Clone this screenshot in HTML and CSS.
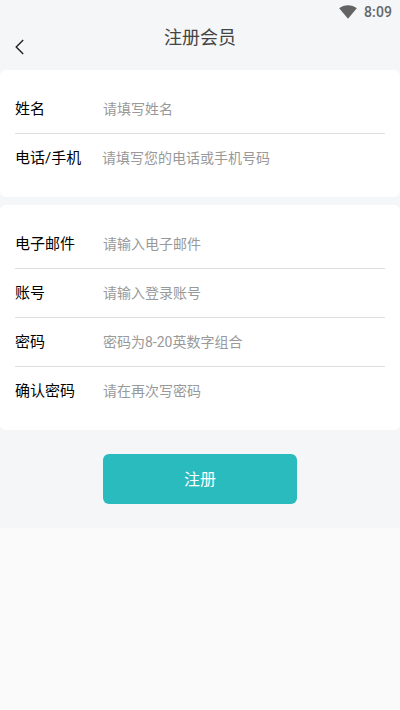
FILE: index.html
```html
<!DOCTYPE html>
<html lang="zh-CN">
<head>
<meta charset="utf-8">
<title>注册会员</title>
<link rel="stylesheet" href="styles.css">
</head>
<body>
<main class="page">
  <div class="status">
    <svg class="wifi" width="18" height="14" viewBox="0 0 18 14"><path d="M.2 3.2C5-.8 13-.8 17.8 3.2L9 13.8z"/></svg>
    <span>8:09</span>
  </div>
  <header class="header">
    <svg class="back" width="10" height="16" viewBox="0 0 10 16"><path d="M8.2 1 1.2 8l7 7"/></svg>
    <h1>注册会员</h1>
  </header>
  <section class="card">
    <label class="row"><span class="name">姓名</span><span class="hint">请填写姓名</span></label>
    <label class="row"><span class="name name-phone">电话/手机</span><span class="hint">请填写您的电话或手机号码</span></label>
  </section>
  <section class="card">
    <label class="row"><span class="name">电子邮件</span><span class="hint">请输入电子邮件</span></label>
    <label class="row"><span class="name">账号</span><span class="hint">请输入登录账号</span></label>
    <label class="row"><span class="name">密码</span><span class="hint">密码为8-20英数字组合</span></label>
    <label class="row"><span class="name">确认密码</span><span class="hint">请在再次写密码</span></label>
  </section>
  <button class="submit">注册</button>
</main>
</body>
</html>
```
FILE: styles.css
```css
* { box-sizing: border-box; }
body {
  margin: 0;
  background: #fafafa;
  font-family: Roboto, "Noto Sans CJK SC", sans-serif;
}
.page {
  height: 528px;
  background: #f4f6f8;
}
.status {
  height: 24px;
  padding: 0 8px;
  display: flex;
  align-items: center;
  justify-content: flex-end;
  gap: 7px;
  font-size: 14px;
  font-weight: 500;
  letter-spacing: 0.1px;
  color: #666;
}
.wifi {
  margin-bottom: 1px;
  fill: #636363;
}
.header {
  height: 46px;
  padding: 0 15px;
  display: grid;
  grid-template-columns: 10px 1fr 10px;
}
.back {
  margin-top: 15px;
  fill: none;
  stroke: #222;
  stroke-width: 1.4;
}
.header h1 {
  margin: 0;
  font-size: 18px;
  font-weight: 400;
  line-height: 28px;
  text-align: center;
  color: #444;
}
.card {
  margin-bottom: 8px;
  padding: 15px 15px 14px;
  background: #fff;
  border-radius: 6px;
}
.row {
  height: 49px;
  padding-bottom: 2px;
  display: flex;
  align-items: center;
  border-bottom: 1px solid #ddd;
}
.row:last-child { border-bottom-color: transparent; }
.name {
  width: 88px;
  padding-bottom: 1px;
  font-size: 15px;
  font-weight: 400;
  color: #000;
}
.name-phone { width: 87px; }
.hint {
  font-size: 14px;
  color: #999;
}
.submit {
  display: block;
  width: 194px;
  height: 50px;
  margin: 24px auto 0;
  padding: 0 0 2px;
  border: 0;
  border-radius: 6px;
  background: #2abbbf;
  color: #fff;
  font: 400 16px Roboto, "Noto Sans CJK SC", sans-serif;
}
```
